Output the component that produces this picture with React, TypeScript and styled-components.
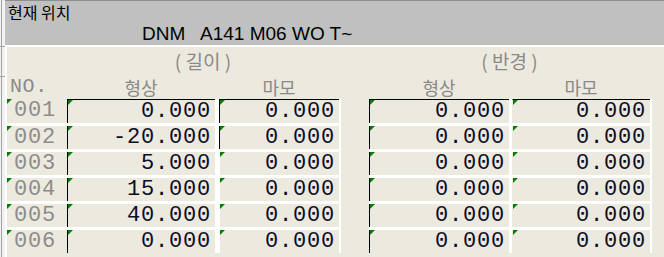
import styled, { createGlobalStyle } from "styled-components";

const GlobalStyle = createGlobalStyle`
    html, body {
        margin: 0;
        padding: 0;
        background: #ece9df;
        overflow: hidden;
    }
    #root {
        width: 664px;
        height: 257px;
    }
`;

const Screen = styled.div`
    display: flex;
    width: 664px;
    height: 257px;
    overflow: hidden;
`;
const Gutter = styled.div`
    width: 5px;
    flex: none;
    display: flex;
    flex-direction: column;
    background: #f2f2f2;
    box-shadow: inset 1px 0 0 #f2f2f2, inset 2px 0 0 #a3a3a3;
`;
const GutterPart = styled.div<{ $h: number }>`
    height: ${(p) => p.$h}px;
    border-bottom: 1px solid #a3a3a3;
`;
const Main = styled.div`
    flex: 1;
    display: flex;
    flex-direction: column;
    border-top: 1px solid #8e8e8e;
`;
const StatusBar = styled.div`
    height: 46px;
    box-sizing: border-box;
    background: #c0c0c0;
    border-bottom: 2px solid #ffffff;
    padding: 2px 0 0 3px;
`;
const StatusTitle = styled.div`
    font-family: "Noto Sans CJK KR", sans-serif;
    font-size: 16px;
    line-height: 18px;
    color: #000;
`;
const StatusCode = styled.div`
    padding-left: 134px;
    margin-top: 2px;
    font-family: "Liberation Sans", Arial, sans-serif;
    font-size: 19px;
    line-height: 22px;
    white-space: pre;
    color: #000;
`;
const Panel = styled.div`
    flex: 1;
    background: #ece9df;
    border-left: 2px solid #ffffff;
`;
const TitleRow = styled.div`
    height: 28px;
    display: grid;
    grid-template-columns: 60px 272px 30px 281px;
    align-items: center;
`;
const HeadRow = styled.div`
    height: 24px;
    display: grid;
    grid-template-columns: 60px 148px 4px 120px 30px 140px 3px 138px;
    align-items: center;
`;
const GroupTitle = styled.div<{ $col: number }>`
    grid-column: ${(p) => p.$col};
    text-align: center;
    font-family: "Noto Sans CJK KR", sans-serif;
    font-size: 19px;
    line-height: 26px;
    color: #8a8a8a;
    white-space: pre;
`;
const ColHead = styled(GroupTitle)`
    font-size: 18px;
    line-height: 24px;
`;
const NoHead = styled.div`
    grid-column: 1;
    padding-left: 3px;
    font-family: "Liberation Mono", monospace;
    font-size: 20px;
    letter-spacing: 0.6px;
    line-height: 24px;
    color: #8a8a8a;
`;
const DataArea = styled.div`
    display: flex;
    align-items: flex-start;
`;
const Table = styled.div<{ $ml: number }>`
    margin-left: ${(p) => p.$ml}px;
    display: flex;
    flex-direction: column;
    gap: 3px;
    background: #ffffff;
    padding-right: 2px;
`;
const Row = styled.div`
    display: flex;
    align-items: stretch;
`;
const Marker = styled.div`
    position: relative;
    &::before {
        content: "";
        position: absolute;
        top: 0;
        left: 0;
        border-top: 5px solid #008000;
        border-right: 5px solid transparent;
    }
`;
const NoCell = styled(Marker)`
    width: 60px;
    box-sizing: border-box;
    padding: 1px 0 0 7px;
    background: #ece9df;
    font-family: "Liberation Mono", monospace;
    font-size: 22px;
    letter-spacing: 0.8px;
    line-height: 22px;
    color: #8c8c8c;
`;
const ValueCell = styled(Marker)<{ $w: number; $ml?: number; $first: boolean; $edge: string }>`
    width: ${(p) => p.$w}px;
    height: ${(p) => (p.$first ? 24 : 23)}px;
    margin-left: ${(p) => p.$ml ?? 0}px;
    box-sizing: border-box;
    background: #ece9df;
    border-top: ${(p) => (p.$first ? "1px solid #000" : "none")};
    border-left: 1px solid ${(p) => p.$edge};
    padding: 1px 4px 0 0;
    text-align: right;
    font-family: "Liberation Mono", monospace;
    font-size: 22px;
    letter-spacing: 0.8px;
    line-height: 22px;
    color: #0c0c26;
`;

const rows = [
    { no: "001", len: "0.000", lenWear: "0.000", rad: "0.000", radWear: "0.000" },
    { no: "002", len: "-20.000", lenWear: "0.000", rad: "0.000", radWear: "0.000" },
    { no: "003", len: "5.000", lenWear: "0.000", rad: "0.000", radWear: "0.000" },
    { no: "004", len: "15.000", lenWear: "0.000", rad: "0.000", radWear: "0.000" },
    { no: "005", len: "40.000", lenWear: "0.000", rad: "0.000", radWear: "0.000" },
    { no: "006", len: "0.000", lenWear: "0.000", rad: "0.000", radWear: "0.000" },
];

export default function App() {
    return (
        <>
            <GlobalStyle />
            <Screen>
                <Gutter>
                    <GutterPart $h={46} />
                    <GutterPart $h={29} />
                </Gutter>
                <Main>
                    <StatusBar>
                        <StatusTitle>현재 위치</StatusTitle>
                        <StatusCode>{"DNM   A141 M06 WO T~"}</StatusCode>
                    </StatusBar>
                    <Panel>
                        <TitleRow>
                            <GroupTitle $col={2}>( 길이 )</GroupTitle>
                            <GroupTitle $col={4}>( 반경 )</GroupTitle>
                        </TitleRow>
                        <HeadRow>
                            <NoHead>NO.</NoHead>
                            <ColHead $col={2}>형상</ColHead>
                            <ColHead $col={4}>마모</ColHead>
                            <ColHead $col={6}>형상</ColHead>
                            <ColHead $col={8}>마모</ColHead>
                        </HeadRow>
                        <DataArea>
                            <Table $ml={0}>
                                {rows.map((r, i) => (
                                    <Row key={r.no}>
                                        <NoCell>{r.no}</NoCell>
                                        <ValueCell $w={148} $first={i === 0} $edge="#000">
                                            {r.len}
                                        </ValueCell>
                                        <ValueCell $w={120} $ml={4} $first={i === 0} $edge={i < 2 ? "#000" : "#fff"}>
                                            {r.lenWear}
                                        </ValueCell>
                                    </Row>
                                ))}
                            </Table>
                            <Table $ml={28}>
                                {rows.map((r, i) => (
                                    <Row key={r.no}>
                                        <ValueCell $w={140} $first={i === 0} $edge="#000">
                                            {r.rad}
                                        </ValueCell>
                                        <ValueCell $w={138} $ml={3} $first={i === 0} $edge="#ece9df">
                                            {r.radWear}
                                        </ValueCell>
                                    </Row>
                                ))}
                            </Table>
                        </DataArea>
                    </Panel>
                </Main>
            </Screen>
        </>
    );
}
